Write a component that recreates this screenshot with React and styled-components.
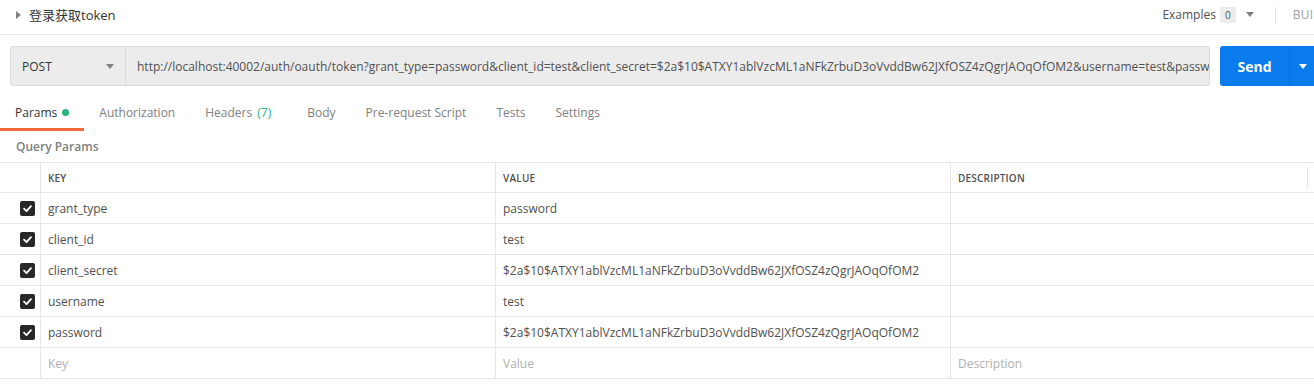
import styled, { createGlobalStyle } from "styled-components";

const Global = createGlobalStyle`
  body {
    margin: 0;
    background: #fff;
    font-family: "Open Sans", "Noto Sans CJK SC", sans-serif;
    color: #505050;
    overflow: hidden;
  }
`;

const Page = styled.div`
  width: 1314px;
  height: 385px;
  overflow: hidden;
`;

const Header = styled.div`
  height: 35px;
  display: flex;
  align-items: center;
  border-bottom: 1px solid #e6e6e6;
  padding: 0 0 0 16px;
  box-sizing: border-box;
`;

const Title = styled.div`
  display: flex;
  align-items: center;
  gap: 8px;
  font-size: 13px;
  color: #333;
  flex: 1;
  padding-bottom: 5px;
`;

const Tri = styled.span`
  width: 0;
  height: 0;
  border-top: 4px solid transparent;
  border-bottom: 4px solid transparent;
  border-left: 5px solid #808080;
`;

const Right = styled.div`
  display: flex;
  align-items: center;
  font-size: 12px;
  color: #505050;
  padding-bottom: 5px;
  white-space: nowrap;
  margin-right: -15px;
`;

const Badge = styled.span`
  background: #ececec;
  color: #505050;
  font-size: 10px;
  border-radius: 2px;
  padding: 1px 5px;
  margin-left: 4px;
`;

const Caret = styled.span`
  width: 0;
  height: 0;
  border-left: 4px solid transparent;
  border-right: 4px solid transparent;
  border-top: 5px solid ${(p) => p.color || "#808080"};
  margin-left: ${(p) => p.ml || 0}px;
`;

const Sep = styled.span`
  width: 1px;
  height: 16px;
  background: #e0e0e0;
  margin: 0 17px 0 21px;
`;

const Build = styled.span`
  color: #a0a0a0;
  font-size: 12px;
  letter-spacing: 0.3px;
`;

const UrlRow = styled.div`
  display: flex;
  padding: 11px 0 0 10px;
  gap: 10px;
`;

const UrlGroup = styled.div`
  flex: 1;
  display: flex;
  height: 40px;
  border: 1px solid #dcdcdc;
  border-radius: 3px;
  background: #ececec;
  box-sizing: border-box;
  overflow: hidden;
`;

const Method = styled.div`
  width: 115px;
  display: flex;
  align-items: center;
  justify-content: space-between;
  padding: 0 11px 0 11px;
  box-sizing: border-box;
  border-right: 1px solid #dcdcdc;
  font-size: 12px;
  color: #333;
`;

const Url = styled.div`
  flex: 1;
  display: flex;
  align-items: center;
  padding: 0 10px 0 11px;
  font-size: 12px;
  color: #505050;
  white-space: nowrap;
  overflow: hidden;
`;

const SendBtn = styled.div`
  width: 100px;
  height: 40px;
  background: #097bed;
  border-radius: 3px;
  display: flex;
  color: #fff;
  flex-shrink: 0;
  margin-right: -6px;
`;

const SendLabel = styled.div`
  width: 69px;
  display: flex;
  align-items: center;
  justify-content: center;
  font-size: 14px;
  font-weight: 700;
  border-right: 1px solid #0a6fd4;
`;

const SendDrop = styled.div`
  flex: 1;
  display: flex;
  align-items: center;
  padding-left: 9px;
`;

const Tabs = styled.div`
  display: flex;
  height: 32px;
  margin-top: 13px;
  padding-left: 1px;
`;

const Tab = styled.div`
  display: flex;
  align-items: center;
  gap: 5px;
  padding: 0 ${(p) => (p.wide ? 21 : 15)}px 3px 15px;
  font-size: 12px;
  color: ${(p) => (p.active ? "#333" : "#808080")};
  border-bottom: 3px solid ${(p) => (p.active ? "#f26b3a" : "transparent")};
  margin-left: ${(p) => (p.first ? -1 : 0)}px;
  white-space: nowrap;
`;

const Dot = styled.span`
  width: 7px;
  height: 7px;
  border-radius: 50%;
  background: #26b47f;
`;

const Count = styled.span`
  color: #26b47f;
  margin-left: 2px;
`;

const Section = styled.div`
  font-size: 12px;
  font-weight: 600;
  color: #808080;
  padding: 7px 16px 0;
  height: 25px;
  box-sizing: border-box;
`;

const Table = styled.div`
  margin-top: 6px;
  border-top: 1px solid #e6e6e6;
`;

const Row = styled.div`
  display: grid;
  grid-template-columns: 40px 455px 455px 1fr;
  height: ${(p) => (p.head ? 30 : 31)}px;
  border-bottom: 1px solid #e6e6e6;
  box-sizing: border-box;
  position: relative;
`;

const Cell = styled.div`
  display: flex;
  align-items: center;
  padding: 0 7px;
  border-left: 1px solid #e6e6e6;
  font-size: ${(p) => (p.head ? 10 : 12)}px;
  font-weight: ${(p) => (p.head ? 600 : 400)};
  color: ${(p) => (p.placeholder ? "#b0b0b0" : "#505050")};
  white-space: nowrap;
  overflow: hidden;
  letter-spacing: ${(p) => (p.head ? "0.2px" : "0")};
`;

const CheckCell = styled.div`
  display: flex;
  align-items: center;
  justify-content: flex-end;
  padding-right: 5px;
`;

const Box = styled.div`
  width: 15px;
  height: 15px;
  border-radius: 2px;
  background: #282828;
  display: flex;
  align-items: center;
  justify-content: center;
`;

const HeadEdge = styled.span`
  position: absolute;
  right: 6px;
  top: 4px;
  bottom: 4px;
  width: 1px;
  background: #e6e6e6;
`;

const Check = () => (
  <Box>
    <svg width="11" height="11" viewBox="0 0 12 12">
      <path d="M2.2 6.2 L4.9 8.8 L9.8 3.4" fill="none" stroke="#fff" strokeWidth="2" strokeLinecap="round" strokeLinejoin="round" />
    </svg>
  </Box>
);

const hash = "$2a$10$ATXY1ablVzcML1aNFkZrbuD3oVvddBw62JXfOSZ4zQgrJAOqOfOM2";

const params = [
  { key: "grant_type", value: "password" },
  { key: "client_id", value: "test" },
  { key: "client_secret", value: hash },
  { key: "username", value: "test" },
  { key: "password", value: hash },
];

const tabs = ["Authorization", "Headers", "Body", "Pre-request Script", "Tests", "Settings"];

export default function App() {
  return (
    <Page>
      <Global />
      <Header>
        <Title>
          <Tri />
          登录获取token
        </Title>
        <Right>
          Examples
          <Badge>0</Badge>
          <Caret ml={10} />
          <Sep />
          <Build>BUILD</Build>
        </Right>
      </Header>

      <UrlRow>
        <UrlGroup>
          <Method>
            POST
            <Caret />
          </Method>
          <Url>
            http://localhost:40002/auth/oauth/token?grant_type=password&amp;client_id=test&amp;client_secret={hash}&amp;username=test&amp;password={hash}
          </Url>
        </UrlGroup>
        <SendBtn>
          <SendLabel>Send</SendLabel>
          <SendDrop>
            <Caret color="#fff" />
          </SendDrop>
        </SendBtn>
      </UrlRow>

      <Tabs>
        <Tab active first>
          Params <Dot />
        </Tab>
        {tabs.map((t) =>
          t === "Headers" ? (
            <Tab key={t} wide>
              <span>
                Headers <Count>(7)</Count>
              </span>
            </Tab>
          ) : (
            <Tab key={t}>{t}</Tab>
          )
        )}
      </Tabs>

      <Section>Query Params</Section>

      <Table>
        <Row head>
          <CheckCell />
          <Cell head>KEY</Cell>
          <Cell head>VALUE</Cell>
          <Cell head>DESCRIPTION</Cell>
          <HeadEdge />
        </Row>
        {params.map((p) => (
          <Row key={p.key}>
            <CheckCell>
              <Check />
            </CheckCell>
            <Cell>{p.key}</Cell>
            <Cell>{p.value}</Cell>
            <Cell />
          </Row>
        ))}
        <Row>
          <CheckCell />
          <Cell placeholder>Key</Cell>
          <Cell placeholder>Value</Cell>
          <Cell placeholder>Description</Cell>
        </Row>
      </Table>
    </Page>
  );
}
